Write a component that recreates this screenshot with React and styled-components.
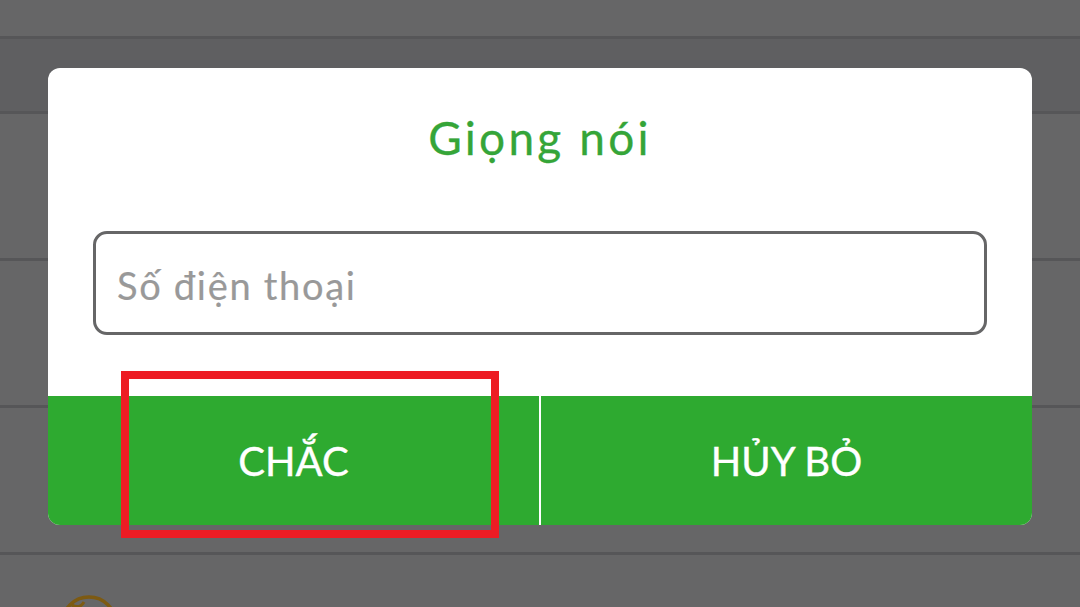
import React from "react";
import styled, { createGlobalStyle } from "styled-components";

const GlobalStyle = createGlobalStyle`
  html, body {
    margin: 0;
    padding: 0;
    background: #666667;
  }
  * {
    box-sizing: border-box;
  }
`;

export default function App() {
  return (
    <Screen>
      <GlobalStyle />
      <Row height={39} />
      <Row height={75} dark />
      <Row height={147} />
      <Row height={147} />
      <Row height={147} />
      <LastRow>
        <Globe viewBox="0 0 58 58" fill="none">
          <circle cx="29" cy="29" r="27" stroke="#7d5a12" strokeWidth="3.5" />
          <path d="M12 10c5 3 9 2 12-3" stroke="#7d5a12" strokeWidth="3" />
        </Globe>
      </LastRow>
      <Dialog>
        <Title>Giọng nói</Title>
        <PhoneInput placeholder="Số điện thoại" readOnly />
        <Actions>
          <ActionButton>CHẮC</ActionButton>
          <ActionButton divided>HỦY BỎ</ActionButton>
        </Actions>
      </Dialog>
      <Highlight />
    </Screen>
  );
}

const Screen = styled.div`
  position: relative;
  width: 1080px;
  height: 607px;
  overflow: hidden;
  background-color: #666667;
  font-family: "Lato", "Noto Sans", sans-serif;
`;
const Row = styled.div`
  height: ${(props) => props.height}px;
  border-bottom: 3px solid #565658;
  background-color: ${(props) => (props.dark ? "#5f5f61" : "#666667")};
`;
const LastRow = styled.div`
  height: 52px;
  padding: 40px 0 0 60px;
`;
const Globe = styled.svg`
  display: block;
  width: 58px;
  height: 58px;
`;
const Dialog = styled.div`
  position: absolute;
  top: 68px;
  left: 48px;
  width: 984px;
  height: 457px;
  display: flex;
  flex-direction: column;
  background-color: #ffffff;
  border-radius: 12px;
  overflow: hidden;
`;
const Title = styled.div`
  height: 163px;
  padding-top: 38px;
  text-align: center;
  font-size: 46px;
  line-height: 64px;
  font-weight: 400;
  letter-spacing: 3.2px;
  color: #35a538;
  -webkit-text-stroke: 0.3px #35a538;
`;
const PhoneInput = styled.input`
  width: 894px;
  height: 104px;
  margin: 0 0 61px 45px;
  padding: 3px 21px 0;
  border: 3px solid #666667;
  border-radius: 14px;
  outline: none;
  background: #ffffff;
  font-family: inherit;
  font-size: 38px;
  letter-spacing: 1.7px;
  &::placeholder {
    color: #999999;
    opacity: 1;
    -webkit-text-stroke: 0.2px #999999;
  }
`;
const Actions = styled.div`
  flex: 1;
  display: flex;
  background-color: #2eaa30;
`;
const ActionButton = styled.div`
  flex: 1;
  display: flex;
  align-items: center;
  justify-content: center;
  font-size: 40px;
  font-weight: 400;
  color: #ffffff;
  -webkit-text-stroke: 0.4px #ffffff;
  border-left: ${(props) => (props.divided ? "2px solid #ffffff" : "none")};
`;
const Highlight = styled.div`
  position: absolute;
  top: 371px;
  left: 121px;
  width: 378px;
  height: 167px;
  border: 8px solid #ed1c24;
`;
